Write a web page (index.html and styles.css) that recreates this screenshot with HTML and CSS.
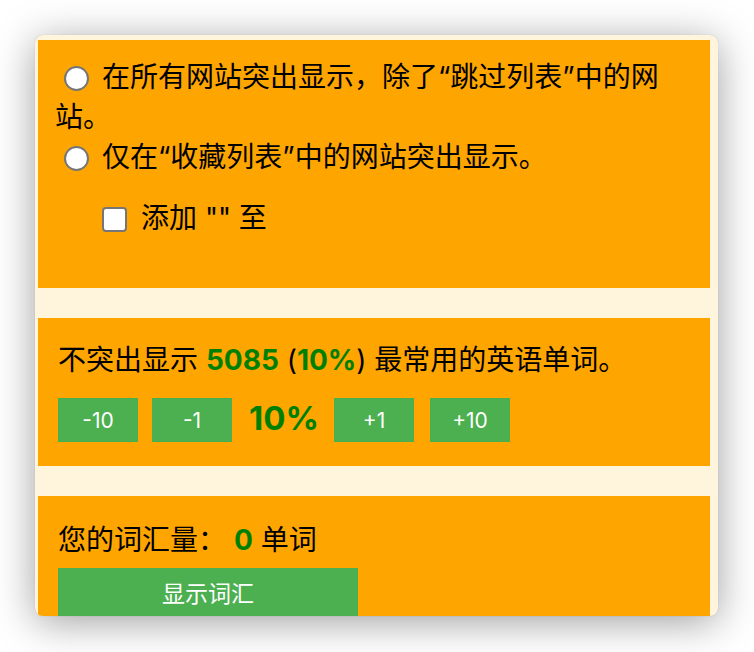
FILE: index.html
```html
<!DOCTYPE html>
<html lang="zh-CN">
<head>
<meta charset="utf-8">
<link rel="stylesheet" href="styles.css">
</head>
<body>
<div class="popup">
  <div class="section s1">
    <label class="opt"><input type="radio" name="mode" class="radio"><span>在所有网站突出显示，除了“跳过列表”中的网站。</span></label>
    <label class="opt"><input type="radio" name="mode" class="radio"><span>仅在“收藏列表”中的网站突出显示。</span></label>
    <label class="chk"><input type="checkbox" class="box"><span>添加 "" 至</span></label>
  </div>
  <div class="section s2">
    <div class="line">不突出显示 <b class="g">5085</b> (<b class="g">10%</b>) 最常用的英语单词。</div>
    <div class="ctrls">
      <button class="btn">-10</button>
      <button class="btn">-1</button>
      <span class="pct">10%</span>
      <button class="btn">+1</button>
      <button class="btn">+10</button>
    </div>
  </div>
  <div class="section s3">
    <div class="line">您的词汇量： <b class="g">0</b> 单词</div>
    <button class="wide">显示词汇</button>
  </div>
</div>
</body>
</html>
```
FILE: styles.css
```css
html, body {
  margin: 0;
  padding: 0;
  background: #ffffff;
}
body {
  font-family: "Inter", "Noto Sans CJK SC", sans-serif;
  color: #000;
  padding: 35px 0 0 35px;
  height: 652px;
  box-sizing: border-box;
  overflow: hidden;
}
.popup {
  width: 683px;
  height: 581px;
  box-sizing: border-box;
  background: #fff5dc;
  border-radius: 8px;
  overflow: hidden;
  padding: 5px 0 0 3px;
  box-shadow: 0 6px 40px rgba(0, 0, 0, 0.38), 0 0 1px rgba(0, 0, 0, 0.25);
}
.section {
  width: 672px;
  box-sizing: border-box;
  background: #ffa500;
  font-size: 28px;
  line-height: 40px;
}
.section + .section {
  margin-top: 30px;
}
.s1 {
  height: 248px;
  padding: 17px 17px 0 17px;
}
.opt {
  display: block;
}
.radio {
  appearance: none;
  -webkit-appearance: none;
  width: 25px;
  height: 25px;
  border: 2px solid #767676;
  border-radius: 50%;
  background: #fff;
  margin: 0 13px 0 9px;
  vertical-align: -4px;
  box-sizing: border-box;
}
.chk {
  display: block;
  margin: 21px 0 0 47px;
}
.box {
  appearance: none;
  -webkit-appearance: none;
  width: 25px;
  height: 25px;
  border: 2px solid #767676;
  border-radius: 4px;
  background: #fff;
  margin: 0 14px 0 0;
  vertical-align: -4px;
  box-sizing: border-box;
}
.s2 {
  height: 148px;
  padding: 22px 20px 0 20px;
}
.g {
  color: #008000;
  font-weight: bold;
}
.ctrls {
  display: flex;
  align-items: center;
  margin-top: 18px;
}
.btn {
  width: 80px;
  height: 44px;
  border: none;
  background: #4caf50;
  color: #fff;
  font-family: "Inter", sans-serif;
  font-size: 21px;
  padding: 0;
  margin-right: 14px;
}
.btn + .pct {
  margin-left: 3px;
}
.pct + .btn {
  margin-right: 16px;
}
.pct {
  color: #008000;
  font-weight: bold;
  font-size: 33px;
  line-height: 44px;
  margin-top: -5px;
  margin-right: 15px;
}
.s3 {
  height: 200px;
  padding: 24px 20px 0 20px;
}
.wide {
  display: block;
  margin-top: 8px;
  width: 300px;
  height: 48px;
  border: none;
  background: #4caf50;
  color: #fff;
  font-family: "Inter", "Noto Sans CJK SC", sans-serif;
  font-size: 23px;
  padding: 0;
}
```
